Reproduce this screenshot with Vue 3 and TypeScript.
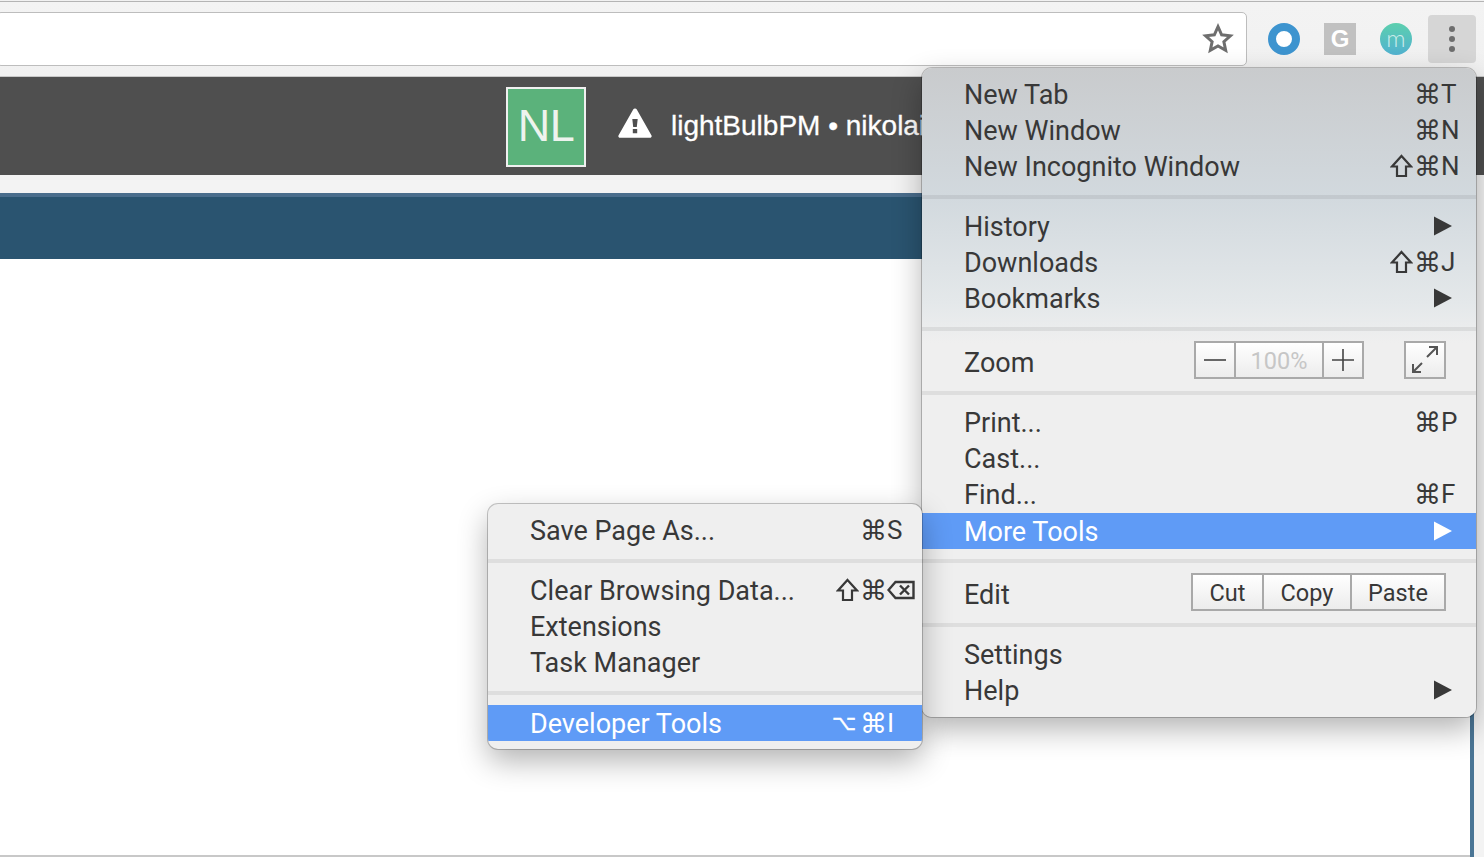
<script setup lang="ts">
interface MenuItem {
  label: string
  mods?: string
  shift?: boolean
  alt?: boolean
  keyName?: string
  del?: boolean
  arrow?: boolean
  active?: boolean
  control?: 'zoom' | 'edit'
}

const mainMenu: MenuItem[][] = [
  [
    { label: 'New Tab', mods: '⌘', keyName: 'T' },
    { label: 'New Window', mods: '⌘', keyName: 'N' },
    { label: 'New Incognito Window', shift: true, mods: '⌘', keyName: 'N' },
  ],
  [
    { label: 'History', arrow: true },
    { label: 'Downloads', shift: true, mods: '⌘', keyName: 'J' },
    { label: 'Bookmarks', arrow: true },
  ],
  [{ label: 'Zoom', control: 'zoom' }],
  [
    { label: 'Print...', mods: '⌘', keyName: 'P' },
    { label: 'Cast...' },
    { label: 'Find...', mods: '⌘', keyName: 'F' },
    { label: 'More Tools', arrow: true, active: true },
  ],
  [{ label: 'Edit', control: 'edit' }],
  [{ label: 'Settings' }, { label: 'Help', arrow: true }],
]

const subMenu: MenuItem[][] = [
  [{ label: 'Save Page As...', mods: '⌘', keyName: 'S' }],
  [
    { label: 'Clear Browsing Data...', shift: true, mods: '⌘', del: true },
    { label: 'Extensions' },
    { label: 'Task Manager' },
  ],
  [{ label: 'Developer Tools', alt: true, mods: '⌘', keyName: 'I', active: true }],
]

const editActions = ['Cut', 'Copy', 'Paste']
const menus = [
  { name: 'main', groups: mainMenu },
  { name: 'sub', groups: subMenu },
]
</script>

<template>
  <div class="page">
    <div class="toolbar">
      <div class="url-bar">
        <svg class="star" width="32" height="32" viewBox="0 0 30 30">
          <path d="M15 3.5l3.4 7.6 8.2.9-6.1 5.5 1.7 8.1-7.2-4.1-7.2 4.1 1.7-8.1-6.1-5.5 8.2-.9z" fill="none" stroke="#6e6e6e" stroke-width="2.8" stroke-linejoin="miter" />
        </svg>
      </div>
      <div class="ext ext--ring"></div>
      <div class="ext ext--g">G</div>
      <div class="ext ext--m">m</div>
      <button class="kebab"><i></i><i></i><i></i></button>
    </div>

    <header class="site-header">
      <div class="logo">NL</div>
      <svg class="warn" width="34" height="30" viewBox="0 0 34 30">
        <path fill-rule="evenodd" d="M17 0.5c.8 0 1.4.4 1.8 1.1l14.6 25.6c.7 1.3 0 2.5-1.5 2.5H2.1c-1.5 0-2.2-1.2-1.5-2.5L15.2 1.600C15.600.9 16.200.5 17 .5zM14.300 11l.9 8h3.600l.9-8zM14.800 21v4.300h4.400V21z" fill="#fff" />
      </svg>
      <span class="site-title">lightBulbPM • nikolai</span>
    </header>

    <div class="gap-band"></div>
    <div class="nav-band"></div>

    <main class="content">
      <div class="content__body"></div>
      <div class="content__strip"></div>
    </main>

    <nav v-for="menu in menus" :key="menu.name" class="menu" :class="`menu--${menu.name}`">
      <template v-for="(group, i) in menu.groups" :key="i">
        <div v-if="i > 0" class="sep"></div>
        <div
          v-for="item in group"
          :key="item.label"
          class="row"
          :class="{ 'row--active': item.active, 'row--control': item.control }"
        >
          <span class="row__label">{{ item.label }}</span>

          <div v-if="item.control === 'zoom'" class="zoom-controls">
            <div class="btn-group">
              <span class="btn btn--icon">
                <svg width="24" height="24" viewBox="0 0 24 24"><path d="M1 12h22" stroke="#444" stroke-width="1.600" /></svg>
              </span>
              <span class="btn btn--pct">100%</span>
              <span class="btn btn--icon">
                <svg width="24" height="24" viewBox="0 0 24 24"><path d="M1 12h22M12 1v22" stroke="#444" stroke-width="1.600" /></svg>
              </span>
            </div>
            <span class="btn btn--full">
              <svg width="30" height="30" viewBox="0 0 30 30">
                <path d="M17 12L27 2M19 2h8v8M3 27l9-9M3 19v8h8" fill="none" stroke="#555" stroke-width="2" />
              </svg>
            </span>
          </div>

          <div v-else-if="item.control === 'edit'" class="btn-group btn-group--edit">
            <span v-for="action in editActions" :key="action" class="btn" :class="`btn--${action.toLowerCase()}`">{{ action }}</span>
          </div>

          <svg v-else-if="item.arrow" class="arrow" width="18" height="20" viewBox="0 0 18 20">
            <path d="M0 0.500L18 10 0 19.500z" />
          </svg>

          <div v-else-if="item.mods" class="shortcut">
            <svg v-if="item.shift" class="shift" width="23" height="24" viewBox="0 0 23 24">
              <path d="M11.500 2L21 12.500h-5V22H7v-9.500H2z" fill="none" stroke="currentColor" stroke-width="2.200" stroke-linejoin="miter" />
            </svg>
            <span v-if="item.alt" class="shortcut__alt">⌥</span>
            <span class="shortcut__mods">{{ item.mods }}</span>
            <span class="shortcut__key">
              <svg v-if="item.del" width="28" height="20" viewBox="0 0 28 20">
                <path d="M8.500 2H26.500V18H8.500L1.500 10zM13 5.500l9 9M22 5.500l-9 9" fill="none" stroke="currentColor" stroke-width="2.400" />
              </svg>
              <template v-else>{{ item.keyName }}</template>
            </span>
          </div>
        </div>
      </template>
    </nav>
  </div>
</template>

<style scoped>
.page {
  position: relative;
  display: flex;
  flex-direction: column;
  width: 1484px;
  height: 857px;
  overflow: hidden;
  background: #f3f3f3;
  font-family: Roboto, 'Noto Sans', sans-serif;
}

.toolbar {
  display: flex;
  align-items: center;
  gap: 24px;
  height: 77px;
  box-sizing: border-box;
  padding: 1px 8px 0 0;
  background: linear-gradient(#f3f3f3, #f1f1f1);
  border-top: 1px solid #f1f1f1;
  box-shadow: inset 0 1px 0 #b4b4b4;
  border-bottom: 1px solid #c8c8c8;
}

.url-bar {
  display: flex;
  align-items: center;
  justify-content: flex-end;
  flex: 1;
  height: 54px;
  box-sizing: border-box;
  margin-left: -4px;
  margin-right: -3px;
  padding-right: 12px;
  background: #fff;
  border: 1px solid #bdbdbd;
  border-radius: 5px;
}

.ext {
  display: flex;
  align-items: center;
  justify-content: center;
  width: 32px;
  height: 32px;
  box-sizing: border-box;
  color: #fff;
}

.ext--ring {
  border: 8px solid #3d94cf;
  border-radius: 50%;
  background: #fff;
}

.ext--g {
  background: #c1c1c1;
  font: 700 24px 'Liberation Sans', sans-serif;
}

.ext--m {
  border-radius: 50%;
  background: linear-gradient(#5ccfae, #52b2d0);
  color: rgba(255, 255, 255, 0.7);
  font: 300 24px Lato, sans-serif;
  padding-bottom: 4px;
}

.kebab {
  display: flex;
  flex-direction: column;
  align-items: center;
  justify-content: center;
  gap: 4px;
  width: 48px;
  height: 48px;
  margin-left: -8px;
  padding: 0;
  border: 0;
  border-radius: 4px;
  background: #d6d6d6;
}

.kebab i {
  width: 6px;
  height: 6px;
  border-radius: 50%;
  background: #6e6e6e;
}

.site-header {
  display: flex;
  align-items: center;
  height: 98px;
  box-sizing: border-box;
  padding: 2px 0 0 506px;
  background: #4f4f4f;
  white-space: nowrap;
}

.logo {
  display: flex;
  align-items: center;
  justify-content: center;
  width: 80px;
  height: 80px;
  box-sizing: border-box;
  padding-bottom: 2px;
  border: 2px solid #f0f0f0;
  background: #5bb27b;
  color: #eef3ee;
  font: 45px 'Liberation Sans', sans-serif;
  letter-spacing: -0.5px;
}

.warn {
  margin-left: 32px;
  margin-top: -9px;
}

.site-title {
  margin-left: 19px;
  margin-top: -2px;
  color: #fff;
  font: 28px 'Liberation Sans', sans-serif;
  -webkit-text-stroke: 0.3px #fff;
}

.gap-band {
  height: 18px;
  background: #f3f3f3;
}

.nav-band {
  width: 1470px;
  height: 62px;
  border-top: 4px solid #4a6d8c;
  background: #2a5470;
}

.content {
  display: flex;
  flex: 1;
}

.content__body {
  width: 1470px;
  background: #fff;
  border-bottom: 2px solid #c8c8c8;
}

.content__strip {
  width: 4px;
  background: #4a7595;
}

.menu {
  position: absolute;
  display: flex;
  flex-direction: column;
  box-sizing: border-box;
  border-radius: 10px;
  background: #efefef;
  box-shadow:
    0 0 0 1px rgba(0, 0, 0, 0.22),
    0 12px 30px rgba(0, 0, 0, 0.3);
  color: #383838;
  font-size: 27px;
  overflow: hidden;
}

.menu--main {
  top: 68px;
  left: 922px;
  width: 554px;
  height: 649px;
  padding: 8px 0 9px;
  background: linear-gradient(#c9cbcd 0, #d2d9de 130px, #e4e8ea 235px, #efefef 275px);
}

.menu--sub {
  top: 504px;
  left: 488px;
  width: 434px;
  height: 245px;
  padding: 8px 0;
}

.sep {
  flex-shrink: 0;
  height: 4px;
  margin: 11px 0 9px;
  background: rgba(0, 0, 0, 0.07);
}

.row {
  display: flex;
  flex-shrink: 0;
  align-items: center;
  height: 36px;
  padding: 0 17px 0 42px;
  white-space: nowrap;
}

.row--control {
  margin-top: 4px;
}

.row--active {
  margin-top: 1px;
  margin-bottom: -1px;
  background: #5f9bf6;
  color: #fff;
}

.row__label {
  flex: 1;
  margin-top: 1px;
}

.shortcut {
  display: flex;
  align-items: center;
}

.shift {
  margin-right: 1px;
}

.shortcut__mods {
  font: 27px 'DejaVu Sans', sans-serif;
}

.shortcut__alt {
  margin-right: 4px;
  font: 21px 'DejaVu Sans', sans-serif;
  -webkit-text-stroke: 0.4px #fff;
}

.shortcut__key {
  display: flex;
  width: 18px;
  font-size: 26px;
}

.shortcut__key svg {
  flex-shrink: 0;
}

.arrow {
  margin-right: 7px;
  fill: currentColor;
}

.zoom-controls {
  display: flex;
  gap: 40px;
  margin-top: -4px;
  margin-right: 13px;
}

.btn-group {
  display: flex;
  border: 2px solid #a9a9a9;
}

.btn {
  display: flex;
  align-items: center;
  justify-content: center;
  height: 34px;
  background: linear-gradient(#fff, #ececec);
  font-size: 23.500px;
}

.btn + .btn {
  border-left: 2px solid #a9a9a9;
}

.btn--icon {
  width: 38px;
}

.btn--pct {
  width: 86px;
  height: 32px;
  padding-top: 2px;
  color: #c6c6c6;
}

.btn--full {
  width: 38px;
  border: 2px solid #a9a9a9;
}

.btn-group--edit {
  margin-top: -4px;
  margin-right: 13px;
}

.btn--cut,
.btn--copy,
.btn--paste {
  height: 32px;
  padding-top: 2px;
}

.btn--cut {
  width: 69px;
}

.btn--copy {
  width: 86px;
}

.btn--paste {
  width: 92px;
}
</style>
